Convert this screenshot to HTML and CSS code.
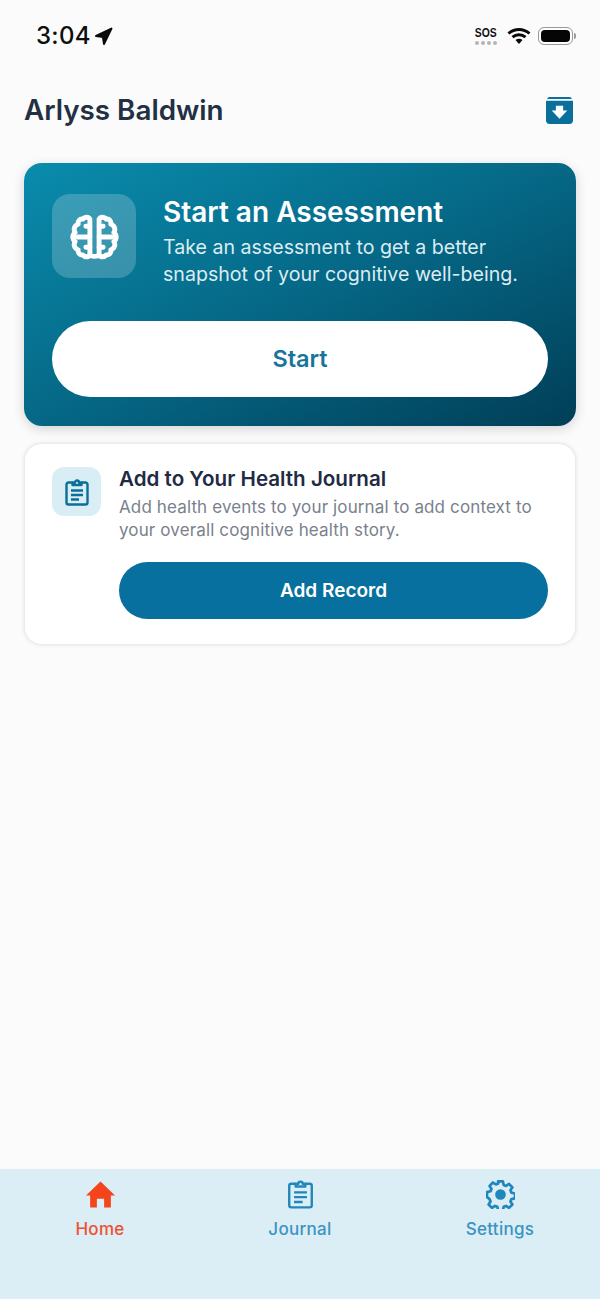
FILE: index.html
```html
<!DOCTYPE html>
<html lang="en">
<head>
<meta charset="utf-8">
<title>Home</title>
<link rel="stylesheet" href="styles.css">
</head>
<body>
<div class="app">
  <div class="status">
    <div class="time"><span>3:04</span>
      <svg class="loc" viewBox="0 0 18 18"><path d="M16.500 1.500 2 8.500 8.500 9.500 9.500 16Z" fill="#0a0a0a" stroke="#0a0a0a" stroke-width="2" stroke-linejoin="round"/></svg>
    </div>
    <div class="status-right">
      <div class="sos"><span class="sos-t">SOS</span><span class="dots"><i></i><i></i><i></i><i></i></span></div>
      <svg class="wifi" viewBox="0 0 24 18"><path d="M1.500 6.500C7.500 1 16.500 1 22.500 6.500" fill="none" stroke="#0a0a0a" stroke-width="3"/><path d="M5.500 10.200C9.300 6.800 14.700 6.800 18.500 10.200" fill="none" stroke="#0a0a0a" stroke-width="3"/><path d="M8.500 13 12 17l3.500-4c-2-1.700-5-1.700-7 0Z" fill="#0a0a0a"/></svg>
      <div class="batt"><div class="batt-body"><div class="batt-fill"></div></div><div class="batt-tip"></div></div>
    </div>
  </div>

  <header class="top">
    <h1>Arlyss Baldwin</h1>
    <svg class="archive" viewBox="0 0 26 26"><path d="M4 0h18A3 3 0 0 1 25 2H1A3 3 0 0 1 4 0Z" fill="#0b6f9c"/><path d="M0 3.500h26V22.500a3.500 3.500 0 0 1-3.500 3.500H3.500A3.500 3.500 0 0 1 0 22.500Z" fill="#0b6f9c"/><path d="M9.500 8.500h7v4.500h4L13 21l-7.500-8h4Z" fill="#fff"/></svg>
  </header>

  <main class="content">
    <section class="hero">
      <div class="hero-top">
        <div class="hero-icon">
          <svg viewBox="0 0 48 48" fill="none" stroke="#fff" stroke-width="4.800" stroke-linecap="round" stroke-linejoin="round"><path d="M19.500 7c-1.500-2.500-5-2.500-7 0-3-.5-5 2-4.500 5-3.500 1-5 5-3 8-3 2.500-3 6.500 0 9-2 3-.5 7 3 8-.5 3 1.500 5.500 4.500 5 2 2.500 5.500 2.500 7 0Z"/><path d="M28.500 7c1.500-2.500 5-2.500 7 0 3-.5 5 2 4.500 5 3.500 1 5 5 3 8 3 2.500 3 6.500 0 9 2 3 .5 7-3 8 .5 3-1.500 5.500-4.500 5-2 2.500-5.500 2.500-7 0Z"/><path d="M19.500 42c1.500 2 7.500 2 9 0M19.500 24.500H7M28.500 24.500H41M19.500 14h-4M28.500 14h4M19.500 34.500h-4M28.500 34.500h4"/></svg>
        </div>
        <div class="hero-text">
          <h2>Start an Assessment</h2>
          <p>Take an assessment to get a better snapshot of your cognitive well-being.</p>
        </div>
      </div>
      <button class="start">Start</button>
    </section>

    <section class="journal">
      <div class="journal-icon">
        <svg viewBox="0 0 24 28" fill="none" stroke="#0b6f9c" stroke-width="2.400" stroke-linejoin="round"><path d="M7.500 4.500H3.500a2 2 0 0 0-2 2v18a2 2 0 0 0 2 2h17a2 2 0 0 0 2-2v-18a2 2 0 0 0-2-2h-4"/><path d="M7.500 7V4.500H10a2 2 0 0 1 4 0h2.500V7Z"/><path d="M6 12.500h12M6 17h12M6 21.500h8"/></svg>
      </div>
      <div class="journal-body">
        <h3>Add to Your Health Journal</h3>
        <p>Add health events to your journal to add context to your overall cognitive health story.</p>
        <button class="add">Add Record</button>
      </div>
    </section>
  </main>

  <nav class="tabs">
    <div class="tab active">
      <svg viewBox="0 0 28 26"><path d="M14 .5 28 14h-4v11.500h-6.500V17h-7v8.500H4V14H0Z" fill="#f4441c"/></svg>
      <span>Home</span>
    </div>
    <div class="tab">
      <svg viewBox="0 1 24 27" fill="none" stroke="#1f87bb" stroke-width="2.200" stroke-linejoin="round"><path d="M7.500 4.500H3.500a2 2 0 0 0-2 2v18a2 2 0 0 0 2 2h17a2 2 0 0 0 2-2v-18a2 2 0 0 0-2-2h-4"/><path d="M7.500 7V4.500H10a2 2 0 0 1 4 0h2.500V7Z"/><path d="M6 12.500h12M6 17h12M6 21.500h8"/></svg>
      <span>Journal</span>
    </div>
    <div class="tab">
      <svg viewBox="0 0 30 30"><path d="M12.500 2h5l.8 3.600 2.400 1 3.100-2 3.500 3.500-2 3.100 1 2.400 3.700.9v5l-3.700.8-1 2.400 2 3.100-3.500 3.500-3.100-2-2.400 1-.8 3.600h-5l-.8-3.600-2.400-1-3.100 2-3.500-3.500 2-3.100-1-2.400L1 18v-5l3.700-.9 1-2.400-2-3.100 3.500-3.500 3.100 2 2.400-1Z" transform="translate(0 -.500)" fill="none" stroke="#1f87bb" stroke-width="2.800" stroke-linejoin="round"/><circle cx="15" cy="15" r="5.500" fill="#1f87bb"/></svg>
      <span>Settings</span>
    </div>
  </nav>
</div>
</body>
</html>
```
FILE: styles.css
```css
* { box-sizing: border-box; }
html, body { margin: 0; padding: 0; }
body { font-family: Inter, "Liberation Sans", sans-serif; background: #fbfbfb; }
h1, h2, h3, p { margin: 0; }
button { font-family: inherit; border: 0; display: block; padding: 0; }

.app { width: 600px; height: 1299px; display: flex; flex-direction: column; background: #fbfbfb; overflow: hidden; }

.status { height: 72px; flex: none; display: flex; justify-content: space-between; align-items: flex-start; padding: 21px 24px 0 36px; }
.time { display: flex; align-items: center; gap: 3px; font-size: 24px; line-height: 30px; font-weight: 500; color: #0d0d0d; letter-spacing: .3px; }
.loc { width: 19px; height: 19px; }
.status-right { display: flex; align-items: center; height: 30px; }
.sos { display: flex; flex-direction: column; align-items: center; gap: 2px; width: 24px; margin-right: 9px; }
.sos-t { font-family: "Liberation Sans", sans-serif; font-size: 13px; line-height: 12px; font-weight: 700; transform: scaleX(.8); color: #111; }
.dots { display: flex; gap: 2px; }
.dots i { width: 4px; height: 4px; border-radius: 50%; background: #b5b5b5; display: block; }
.wifi { width: 24px; height: 18px; margin-right: 7px; }
.batt { display: flex; align-items: center; gap: 1px; }
.batt-body { width: 35px; height: 18px; border: 1px solid #9a9a9a; border-radius: 6px; padding: 2px; }
.batt-fill { width: 100%; height: 100%; background: #050505; border-radius: 4px; }
.batt-tip { width: 2px; height: 6px; background: #9a9a9a; border-radius: 0 2px 2px 0; }

.top { height: 76px; flex: none; display: flex; justify-content: space-between; align-items: center; padding: 0 27px 0 24px; margin-bottom: 15px; }
.top h1 { font-size: 27.800px; line-height: 34px; font-weight: 600; color: #233044; }
.archive { width: 27px; height: 27px; }

.content { flex: 1; display: flex; flex-direction: column; gap: 18px; padding: 0 24px; }

.hero { height: 263px; border-radius: 18px; padding: 31px 28px 29px; background: linear-gradient(to bottom right, #0a8cad 0%, #056684 52%, #013e57 100%); box-shadow: 0 3px 12px rgba(0,0,0,.16); display: flex; flex-direction: column; justify-content: space-between; }
.hero-top { display: flex; gap: 27px; }
.hero-icon { width: 84px; height: 84px; flex: none; border-radius: 18px; background: rgba(255,255,255,.2); display: flex; align-items: center; justify-content: center; }
.hero-icon svg { width: 49px; height: 49px; }
.hero-text h2 { font-size: 28px; line-height: 36px; font-weight: 600; color: #fff; }
.hero-text p { margin-top: 4px; font-size: 19.600px; line-height: 27px; color: #dcecf2; }
.start { width: 100%; height: 76px; border-radius: 38px; background: #fff; color: #17749a; font-size: 23.500px; font-weight: 600; padding-bottom: 2px; }

.journal { height: 200px; border-radius: 16px; background: #fff; box-shadow: 0 0 4px rgba(0,0,0,.16); padding: 23px 27px 0 27px; display: flex; gap: 18px; margin: 0 1px; }
.journal-icon { width: 49px; height: 49px; flex: none; border-radius: 12px; background: #d9edf5; display: flex; align-items: center; justify-content: center; }
.journal-icon svg { width: 24px; height: 28px; }
.journal-body { flex: 1; }
.journal-body h3 { font-size: 20.600px; line-height: 24px; font-weight: 600; color: #1f2a44; }
.journal-body p { margin-top: 5px; font-size: 17px; line-height: 23px; color: #7a818c; letter-spacing: .13px; }
.add { width: 100%; height: 57px; margin-top: 20px; border-radius: 29px; background: #08709e; color: #fff; font-size: 19px; font-weight: 600; }

.tabs { flex: none; height: 130px; background: #dbedf5; display: flex; padding-top: 11px; }
.tab { flex: 1; display: flex; flex-direction: column; align-items: center; gap: 10px; color: #3a94c2; font-size: 17px; line-height: 21px; font-weight: 500; letter-spacing: .3px; }
.tab svg { height: 29px; width: 29px; }
.tab.active { color: #ed5230; }
```
